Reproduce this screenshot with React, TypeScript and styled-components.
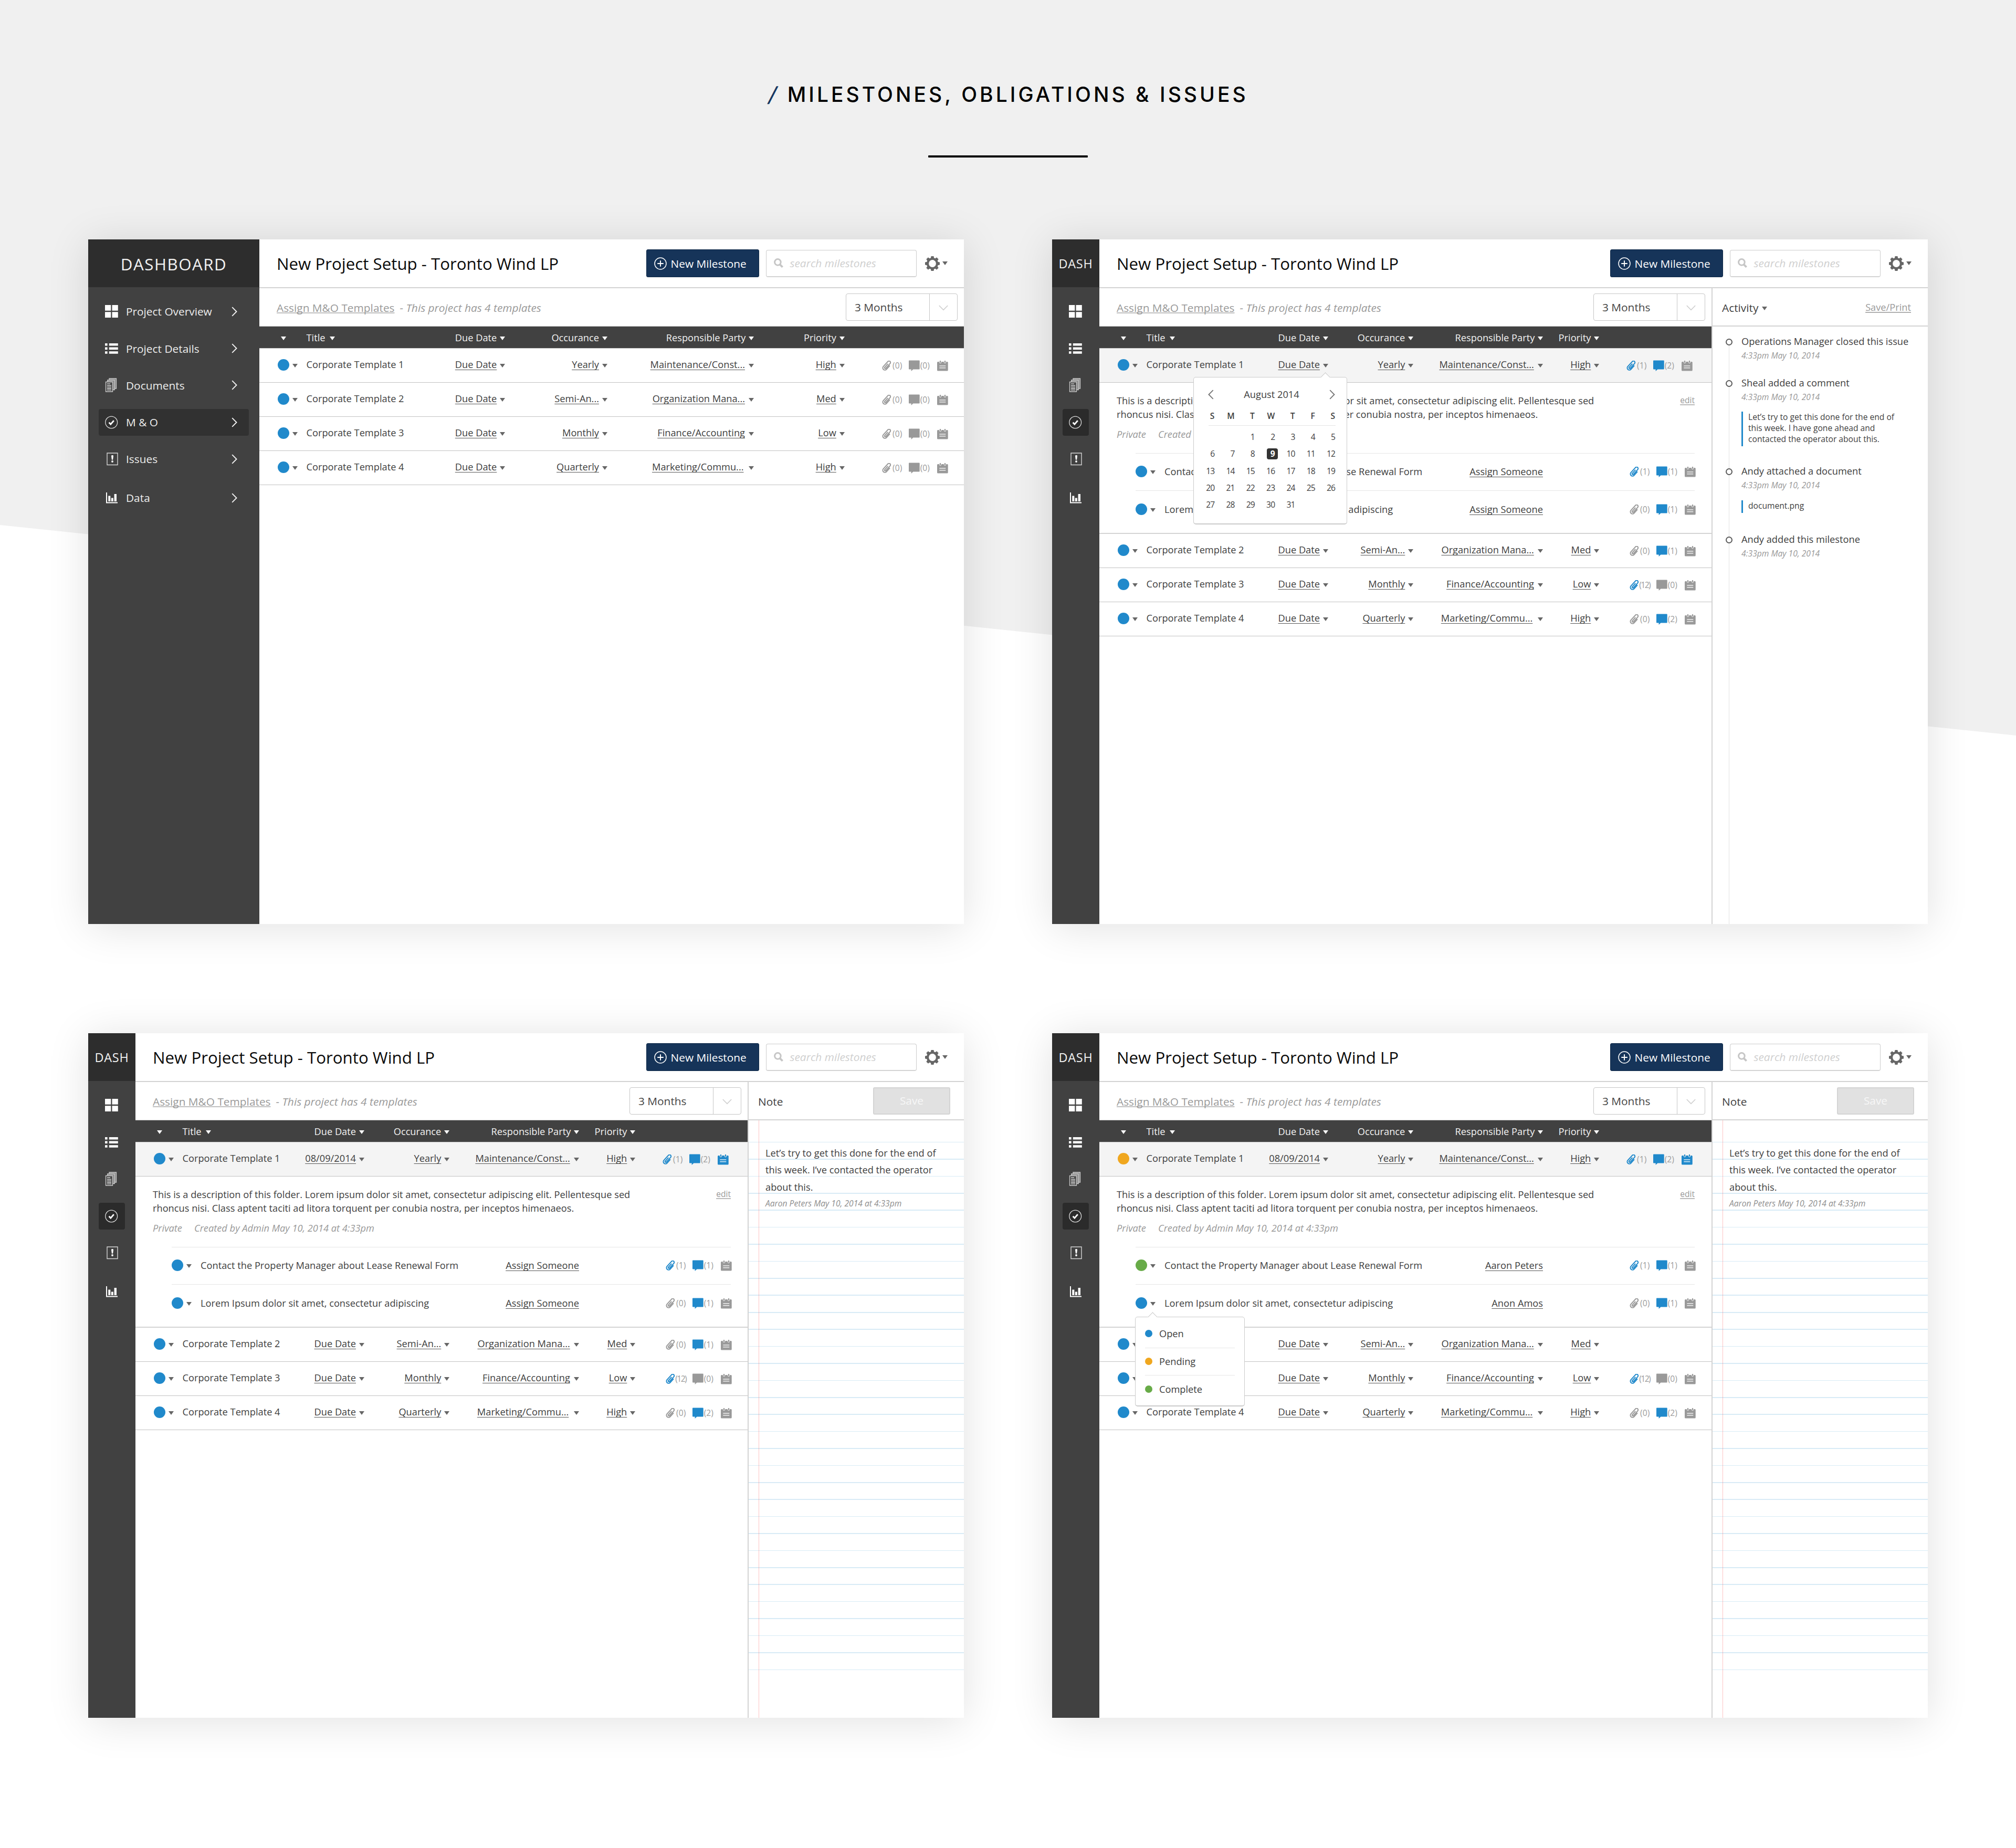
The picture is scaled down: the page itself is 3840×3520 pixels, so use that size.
import type { ReactNode } from "react";
import styled, { createGlobalStyle, css } from "styled-components";

const BLUE = "#2089cb";
const ORANGE = "#f0a71f";
const GREEN = "#68ab48";
const GRAY = "#999";
const LINE = "#c9c9c9";

const GlobalStyle = createGlobalStyle`
  * {
    box-sizing: border-box;
  }
  body {
    margin: 0;
    background: #fff;
    color: #3e3e3e;
    font-family: "Open Sans", sans-serif;
    font-size: 18.24px;
    text-decoration-skip-ink: none;
  }
`;

const Page = styled.div`
  position: relative;
  width: 3840px;
  height: 3520px;
  overflow: hidden;

  &::before {
    content: "";
    position: absolute;
    inset: 0;
    z-index: -1;
    background: #f0f0f0;
    clip-path: polygon(0 0, 100% 0, 100% 1401px, 0 1000px);
  }
`;

const PageHeader = styled.header`
  height: 456px;
  padding-top: 156px;
  display: flex;
  flex-direction: column;
  align-items: center;
`;

const PageTitle = styled.h1`
  margin: 0;
  padding-left: 3px;
  height: 48px;
  line-height: 48px;
  font-family: Inter, sans-serif;
  font-size: 39px;
  font-weight: 500;
  letter-spacing: 5.02px;
  color: #000;
  white-space: nowrap;
`;

const Slash = styled.span`
  display: inline-block;
  margin-right: 15px;
  font-weight: 500;
  color: #16365f;
  transform: skewX(-14deg);
`;

const Rule = styled.div`
  width: 304px;
  height: 4px;
  margin-top: 92px;
  border-radius: 1px;
  background: #000;
`;

const Screens = styled.main`
  display: grid;
  grid-template-columns: 1668px 1668px;
  column-gap: 168px;
  row-gap: 208px;
  margin-left: 168px;
`;

const Window = styled.section`
  display: flex;
  height: 1304px;
  background: #fff;
  box-shadow: 0 6px 75px rgba(0, 0, 0, 0.12);
`;

/* sidebar */

const Sidebar = styled.aside<{ $collapsed: boolean }>`
  flex: none;
  width: ${(p) => (p.$collapsed ? 90 : 326)}px;
  background: #414141;
`;

const Brand = styled.div<{ $collapsed: boolean }>`
  height: 91px;
  padding-top: 2px;
  display: flex;
  align-items: center;
  justify-content: center;
  background: #2d2d2d;
  color: #f2f2f2;
  ${(p) =>
    p.$collapsed
      ? css`
          font-size: 23.45px;
          letter-spacing: 0.75px;
          padding-top: 0;
        `
      : css`
          font-size: 31.27px;
          letter-spacing: 1.5px;
        `}
`;

const Nav = styled.nav`
  display: flex;
  flex-direction: column;
  gap: 19.6px;
  padding: 21px 20px 0 19.5px;
`;

const NavItem = styled.a<{ $active?: boolean; $collapsed: boolean }>`
  height: 50.7px;
  padding: 0 ${(p) => (p.$collapsed ? 0 : 22)}px 0 12.5px;
  display: flex;
  align-items: center;
  border-radius: 4px;
  font-size: 20.85px;
  color: #ededed;
  background: ${(p) => (p.$active ? (p.$collapsed ? "#2b2b2b" : "#313131") : "none")};

  &:last-child {
    margin-top: 3.6px;
  }
`;

const NavIcon = styled.span`
  flex: none;
  width: 25px;
  display: flex;
  justify-content: center;
`;

const NavLabel = styled.span`
  flex: 1;
  margin-left: 15px;
`;

/* content */

const Content = styled.div`
  flex: 1;
  min-width: 0;
  display: flex;
  flex-direction: column;
`;

const TopBar = styled.header`
  height: 93px;
  flex: none;
  padding: 0 31px 0 33px;
  display: flex;
  align-items: center;
  border-bottom: 2px solid #d3d3d3;
`;

const ProjectTitle = styled.h2`
  flex: 1;
  margin: 1px 0 0;
  font-size: 31.27px;
  font-weight: 400;
  color: #0a0a0a;
`;

const NewButton = styled.button`
  width: 215px;
  height: 53px;
  padding: 0 0 0 14px;
  display: flex;
  align-items: center;
  gap: 8px;
  border: 1px solid #0f2947;
  border-radius: 3px;
  background: #163459;
  color: #fff;
  font: inherit;
  font-size: 20.85px;
`;

const SearchBox = styled.div`
  width: 287px;
  height: 52px;
  margin-left: 13px;
  padding-left: 14px;
  display: flex;
  align-items: center;
  gap: 13px;
  border: 1.5px solid #ccc;
  border-bottom: 2px solid #d4d4d4;
  border-radius: 4px;
  font-size: 20.85px;
  font-style: italic;
  color: #cfcfcf;
`;

const Settings = styled.div`
  margin-left: 16.5px;
  display: flex;
  align-items: center;
  gap: 5px;
`;

const Body = styled.div`
  flex: 1;
  display: flex;
`;

const Main = styled.div`
  position: relative;
  flex: 1;
  min-width: 0;
`;

const SubBar = styled.div`
  height: 73px;
  padding: 0 12px 0 33px;
  display: flex;
  align-items: center;
  border-bottom: 1px solid ${LINE};
  font-size: 20.85px;
  color: ${GRAY};
`;

const AssignLink = styled.a`
  padding-top: 2px;
  text-decoration: underline 2px #c0c0c0;
  text-underline-offset: 1px;
`;

const Hint = styled.em`
  flex: 1;
  margin-left: 10px;
  padding-top: 2px;
`;

const Select = styled.div`
  width: 213px;
  height: 52px;
  display: flex;
  align-items: center;
  border: 1px solid #c6c6c6;
  border-radius: 4px;
  color: #444;
  font-size: 20.85px;
`;

const SelectValue = styled.span`
  width: 159px;
  height: 100%;
  padding: 0 0 0 16px;
  display: flex;
  align-items: center;
  border-right: 1px solid #c6c6c6;
`;

const SelectArrow = styled.span`
  flex: 1;
  padding-top: 3px;
  display: flex;
  justify-content: center;
`;

const Caret = styled.i<{ $color?: string; $top?: number }>`
  flex: none;
  width: 0;
  height: 0;
  margin-top: ${(p) => p.$top ?? 0}px;
  border: 5px solid transparent;
  border-top: 7px solid ${(p) => p.$color ?? "#666"};
  border-bottom: 0;
`;

/* table */

const columns = {
  wide: "89.5px 378.8px 194.7px 279.5px 172.3px 1fr",
  narrow: "89.5px 346.5px 162.3px 247px 107px 1fr",
};

const TableHead = styled.div<{ $narrow: boolean }>`
  height: 42px;
  padding-top: 1px;
  display: grid;
  grid-template-columns: ${(p) => (p.$narrow ? columns.narrow : columns.wide)};
  align-items: center;
  border-bottom: 1px solid #d0d0d0;
  background: #414141;
  color: #f3f3f3;
`;

const TableRow = styled.div<{ $narrow: boolean; $selected?: boolean }>`
  height: 65.1px;
  display: grid;
  grid-template-columns: ${(p) => (p.$narrow ? columns.narrow : columns.wide)};
  align-items: center;
  border-bottom: 1px solid #c2c2c2;
  background: ${(p) => (p.$selected ? "#f4f4f4" : "#fff")};
`;

const StatusCell = styled.div`
  padding: 0 0 2px 35px;
  display: flex;
  align-items: center;
  gap: 6px;
`;

const SortAll = styled.div`
  padding: 2px 0 0 41px;
`;

const TitleCell = styled.div`
  display: flex;
  align-items: center;
  justify-content: space-between;
  white-space: nowrap;
`;

const HeadCell = styled.div`
  display: flex;
  align-items: center;
  justify-content: flex-end;
  gap: 6px;
`;

const Cell = styled(HeadCell)<{ $trail?: number }>`
  gap: ${(p) => 6 + (p.$trail ?? 0)}px;
`;

const TitleHead = styled.span`
  display: flex;
  align-items: center;
  gap: 8px;
`;

const RowTitle = styled.span`
  padding-bottom: 5px;
`;

const Underlined = styled.a`
  padding-bottom: 5px;
  text-decoration: underline 1px #555;
  text-underline-offset: 2.5px;
`;

const Dot = styled.i<{ $color: string; $size?: number }>`
  flex: none;
  width: ${(p) => p.$size ?? 22}px;
  height: ${(p) => p.$size ?? 22}px;
  border-radius: 50%;
  background: ${(p) => p.$color};
`;

const Meta = styled.div<{ $right: number }>`
  justify-self: end;
  margin-right: ${(p) => p.$right}px;
  padding-top: 1px;
  display: grid;
  grid-template-columns: 19px 31.6px 21px 32.6px 21px;
  align-items: center;
`;

const Count = styled.span<{ $tight?: boolean }>`
  margin-left: ${(p) => (p.$tight ? -1 : 0.8)}px;
  padding-bottom: 2px;
  font-size: 15.64px;
  letter-spacing: ${(p) => (p.$tight ? -1.6 : 0)}px;
  color: #9c9c9c;
`;

/* expanded row */

const Detail = styled.div`
  height: 288px;
  padding: 21px 32px 0 33px;
  border-bottom: 2px solid #d4d4d4;
`;

const DetailTop = styled.div`
  display: flex;
  justify-content: space-between;
  line-height: 26px;
`;

const Description = styled.p`
  width: 925px;
  margin: 0;
`;

const EditLink = styled.a`
  font-size: 15.64px;
  line-height: 24px;
  color: ${GRAY};
  text-decoration: underline 1.5px #bbb;
  text-underline-offset: 2px;
`;

const Byline = styled.p`
  display: flex;
  gap: 23px;
  margin: 12px 0 0;
  line-height: 26px;
  font-style: italic;
  color: ${GRAY};
`;

const SubTasks = styled.div`
  margin: 22.5px 0 0 36px;
`;

const SubTask = styled.div`
  height: 71.7px;
  padding-bottom: 1px;
  display: grid;
  grid-template-columns: 55px 1fr auto 289px;
  align-items: center;
  border-top: 1px solid #e6e6e6;
`;

const SubStatus = styled.div`
  display: flex;
  align-items: center;
  gap: 6px;
`;

const Assignee = styled.a`
  text-decoration: underline 1px #555;
  text-underline-offset: 2.5px;
`;

/* popovers */

const Popover = styled.div<{ $left: number; $top: number; $tip: number }>`
  position: absolute;
  left: ${(p) => p.$left}px;
  top: ${(p) => p.$top}px;
  border: 1.5px solid #cbcbcb;
  border-bottom-width: 2px;
  border-radius: 5px;
  background: #fff;

  &::before {
    content: "";
    position: absolute;
    top: -7.5px;
    left: ${(p) => p.$tip - 7}px;
    width: 12px;
    height: 12px;
    border: 1px solid #cbcbcb;
    border-right: 0;
    border-bottom: 0;
    background: #fff;
    transform: rotate(45deg);
  }
`;

const CalendarBox = styled(Popover)`
  width: 293px;
  height: 281px;
`;

const CalendarHead = styled.div`
  display: flex;
  align-items: center;
  justify-content: space-between;
  height: 26px;
  margin: 19px 22px 0 27px;
`;

const Weekdays = styled.div`
  display: grid;
  grid-template-columns: repeat(7, 38.3px);
  height: 22px;
  margin-top: 17px;
  padding-left: 1px;
  font-size: 15.64px;
  font-weight: 600;
  line-height: 22px;
  text-align: right;
`;

const CalendarRule = styled.div`
  height: 1px;
  margin: 7px 21px 5px 28px;
  background: #e4e4e4;
`;

const Days = styled.div`
  display: grid;
  grid-template-columns: repeat(7, 38.3px);
  grid-auto-rows: 32.3px;
  align-items: center;
  justify-items: end;
  padding-left: 1px;
  font-size: 15.64px;
  letter-spacing: -0.9px;
`;

const Day = styled.span<{ $start?: number; $picked?: boolean }>`
  ${(p) => p.$start && `grid-column-start: ${p.$start};`}
  ${(p) =>
    p.$picked &&
    css`
      width: 21px;
      height: 21px;
      margin-right: -6px;
      border-radius: 4px;
      background: #333;
      color: #fff;
      font-weight: 700;
      line-height: 20px;
      text-align: center;
    `}
`;

const StatusMenu = styled(Popover)`
  width: 209px;
  height: 171px;
  padding: 5px 18px 0;
`;

const StatusOption = styled.div`
  height: 52.5px;
  display: flex;
  align-items: center;
  gap: 13px;

  & + & {
    border-top: 1px solid #e6e6e6;
  }
`;

/* right panel */

const Panel = styled.aside`
  flex: none;
  width: 412px;
  display: flex;
  flex-direction: column;
  border-left: 2px solid #d3d3d3;
`;

const PanelHead = styled.div<{ $right: number }>`
  height: 73px;
  flex: none;
  padding: 0 ${(p) => p.$right}px 0 18px;
  display: flex;
  align-items: center;
  justify-content: space-between;
  border-bottom: 2px solid #d3d3d3;
`;

const PanelTitle = styled.span`
  display: flex;
  align-items: center;
  gap: 7px;
  padding-top: 2px;
  font-size: 20.85px;
`;

const SaveLink = styled.a`
  color: ${GRAY};
  text-decoration: underline 1.5px #b0b0b0;
  text-underline-offset: 2px;
`;

const SaveButton = styled.button`
  width: 147px;
  height: 52px;
  padding: 0 0 2px;
  border: 2px solid #d4d4d4;
  border-radius: 3px;
  background: #e1e1e1;
  color: #f7f7f7;
  font: inherit;
  font-size: 20.85px;
`;

const Timeline = styled.div`
  flex: 1;
  padding: 15px 20px 0 25px;
  background: linear-gradient(#e2e2e2, #e2e2e2) 31px 30px / 1px 100% no-repeat;
`;

const Event = styled.div<{ $gap?: number }>`
  display: flex;
  gap: 17px;
  margin-bottom: ${(p) => p.$gap ?? 0}px;
`;

const EventMark = styled.i`
  flex: none;
  width: 13px;
  height: 13px;
  margin-top: 8px;
  border: 2px solid #5a5a5a;
  border-radius: 50%;
  background: #fff;
`;

const EventTitle = styled.div`
  height: 27px;
  line-height: 26px;
  white-space: nowrap;
`;

const EventDate = styled.div`
  font-size: 15.64px;
  font-style: italic;
  line-height: 26px;
  color: ${GRAY};
`;

const Quote = styled.blockquote`
  width: 320px;
  margin: 15.5px 0 0;
  padding: 0 20px 3.4px 10px;
  border-left: 3px solid ${BLUE};
  font-size: 15.64px;
  line-height: 20.9px;
`;

const NotePaper = styled.div`
  flex: 1;
  padding: 46px 20px 0 32px;
  background:
    linear-gradient(rgba(248, 60, 60, 0.3), rgba(248, 60, 60, 0.3)) 19px 0 / 1px 100% no-repeat,
    repeating-linear-gradient(transparent 0 30.8px, #d8ebf6 30.8px 32.41px) 0 10.3px / 100% 1037px
      no-repeat;
`;

const NoteText = styled.p`
  width: 345px;
  margin: 0;
  line-height: 32.4px;
`;

const NoteBy = styled.p`
  margin: 1.7px 0 0;
  font-size: 15.64px;
  font-style: italic;
  line-height: 26px;
  color: #8e8e8e;
`;

/* icons */

const GridIcon = () => (
  <svg width="25" height="24" viewBox="0 0 25 24" fill="#fff">
    <path d="M0 0h11.3v10.8H0zM13.5 0h11.3v10.8H13.5zM0 13.2h11.3V24H0zM13.5 13.2h11.3V24H13.5z" />
  </svg>
);

const ListIcon = () => (
  <svg width="25" height="20" viewBox="0 0 25 20" fill="#fff">
    <path d="M0 0h4.6v4.5H0zM7.8 0h17v4.5h-17zM0 7.6h4.6v4.5H0zM7.8 7.6h17v4.5h-17zM0 15.2h4.6v4.5H0zM7.8 15.2h17v4.5h-17z" />
  </svg>
);

const DocsIcon = () => (
  <svg width="25" height="27" viewBox="0 0 25 27" fill="#8a8a8a" stroke="#c8c8c8" strokeWidth="1.3">
    <path d="M8 1h13.5v19H8z" />
    <path d="M4.7 4h13.5v18.5H4.7z" />
    <path d="M1.5 7.5h13V26h-13z" fill="#4a4a4a" />
    <path d="M4 11.2h6M4 14.4h8M4 17.2h8M4 20h8M4 22.8h8" stroke="#e0e0e0" />
  </svg>
);

const CheckIcon = () => (
  <svg width="25" height="25" viewBox="0 0 25 25" fill="none" stroke="#fff">
    <circle cx="12.2" cy="12.5" r="11.4" strokeWidth="1.3" stroke="#ddd" />
    <path d="M7.6 12.8l3.2 3.3 6-7" strokeWidth="2.9" />
  </svg>
);

const IssueIcon = () => (
  <svg width="25" height="25" viewBox="0 0 25 25">
    <path d="M4 1h20v22.5H4z" fill="none" stroke="#d5d5d5" strokeWidth="1.4" />
    <path d="M12 6.2q0-1.2 2-1.2t2 1.2l-.9 7.6h-2.2z" fill="#fff" />
    <circle cx="14" cy="17" r="1.9" fill="#fff" />
  </svg>
);

const DataIcon = () => (
  <svg width="25" height="21" viewBox="0 0 25 21" fill="#fff">
    <path d="M2 0h2v18.5h20v2H2z" />
    <path d="M6.3 6.5h4v10.5h-4zM11.8 10.5h4V17h-4zM17.6 3h4.4v14h-4.4z" />
  </svg>
);

const Chevron = ({ color = "#f2f2f2", flip = false }) => (
  <svg width="11" height="19" viewBox="0 0 11 19" fill="none" stroke={color} strokeWidth="1.9">
    <path d={flip ? "M9.7 1.2L1.4 9.5l8.3 8.3" : "M1.2 1.2l8.3 8.3-8.3 8.3"} />
  </svg>
);

const DownIcon = () => (
  <svg width="18" height="11" viewBox="0 0 18 11" fill="none" stroke="#cfcfcf" strokeWidth="1.7">
    <path d="M.8 1L9 9.4 17.2 1" />
  </svg>
);

const PlusIcon = () => (
  <svg width="24" height="24" viewBox="0 0 24 24" fill="none" stroke="#fff">
    <circle cx="12" cy="12" r="11" strokeWidth="1.5" />
    <path d="M12 6.2v11.6M6.2 12h11.6" strokeWidth="1.9" />
  </svg>
);

const SearchIcon = () => (
  <svg width="18" height="18" viewBox="0 0 18 18" fill="none" stroke="#c6c6c6">
    <circle cx="7.4" cy="7.4" r="5.8" strokeWidth="3" />
    <path d="M11.6 11.8l5 5" strokeWidth="3.8" />
  </svg>
);

const GearIcon = () => (
  <svg width="28" height="28" viewBox="-14 -14 28 28" fill="#666">
    <circle r="9" fill="none" stroke="#666" strokeWidth="4.2" />
    {[0, 45, 90, 135, 180, 225, 270, 315].map((a) => (
      <path key={a} d="M-3.2 -9.6l.7-4.4h5l.7 4.4z" transform={`rotate(${a})`} />
    ))}
  </svg>
);

const ClipIcon = ({ color }: { color: string }) => (
  <svg width="19" height="19" viewBox="-9.5 -9.5 19 19" fill="none" stroke={color} strokeWidth="2">
    <path
      transform="rotate(42)"
      d="M-1.1 -3.8V5.2a1.4 1.4 0 0 0 2.8 0V-7a2.9 2.9 0 0 0-5.8 0V5.9a4 4 0 0 0 8 0V-3.8"
    />
  </svg>
);

const CommentIcon = ({ color }: { color: string }) => (
  <svg width="21" height="21" viewBox="0 0 21 21" fill={color}>
    <path d="M1 .5h18.7a1 1 0 0 1 1 1v15a1 1 0 0 1-1 1H8.4L4.6 21v-3.5H1a1 1 0 0 1-1-1v-15a1 1 0 0 1 1-1z" />
  </svg>
);

const NoteIcon = ({ color }: { color: string }) => (
  <svg width="21" height="20" viewBox="0 0 21 20">
    <rect y="2" width="20.7" height="17.5" rx="1.5" fill={color} />
    <path d="M3.8 1.2h4.4v2.6L6 5.4 3.8 3.8zM12.8 1.2h4.4v2.6L15 5.4l-2.2-1.6z" fill="#e6e6e6" />
    <path d="M5 0h2v4H5zM14 0h2v4h-2z" fill={color} />
    <path d="M4.3 10h12M4.3 13.8h12" stroke="#fff" strokeWidth="1.4" opacity=".85" />
  </svg>
);

/* data */

type Info = { clips: number; comments: number; note?: boolean };

type Template = {
  title: string;
  due: string;
  occurance: string;
  party: string;
  trail?: number;
  priority: string;
  color?: string;
  info?: Info;
};

type Task = { title: string; assignee: string; color: string; info: Info };

const navItems = [
  { label: "Project Overview", icon: <GridIcon /> },
  { label: "Project Details", icon: <ListIcon /> },
  { label: "Documents", icon: <DocsIcon /> },
  { label: "M & O", icon: <CheckIcon />, active: true },
  { label: "Issues", icon: <IssueIcon /> },
  { label: "Data", icon: <DataIcon /> },
];

const base: Template[] = [
  { title: "Corporate Template 1", due: "Due Date", occurance: "Yearly", party: "Maintenance/Const...", trail: 1.5, priority: "High" },
  { title: "Corporate Template 2", due: "Due Date", occurance: "Semi-An...", party: "Organization Mana...", trail: 1.5, priority: "Med" },
  { title: "Corporate Template 3", due: "Due Date", occurance: "Monthly", party: "Finance/Accounting", trail: 1.5, priority: "Low" },
  { title: "Corporate Template 4", due: "Due Date", occurance: "Quarterly", party: "Marketing/Commu...", trail: 4, priority: "High" },
];

const infos: Info[] = [
  { clips: 1, comments: 2 },
  { clips: 0, comments: 1 },
  { clips: 12, comments: 0 },
  { clips: 0, comments: 2 },
];

const emptyTemplates = base.map((t) => ({ ...t, info: { clips: 0, comments: 0 } }));
const activeTemplates: Template[] = base.map((t, i) => ({ ...t, info: infos[i] }));

const datedTemplates: Template[] = activeTemplates.map((t, i) =>
  i === 0 ? { ...t, due: "08/09/2014", info: { clips: 1, comments: 2, note: true } } : t
);

const pendingTemplates: Template[] = datedTemplates.map((t, i) => {
  if (i === 0) return { ...t, color: ORANGE };
  if (i === 1) return { ...t, info: undefined };
  return t;
});

const makeTasks = (first: string, second: string, color: string): Task[] => [
  {
    title: "Contact the Property Manager about Lease Renewal Form",
    assignee: first,
    color,
    info: { clips: 1, comments: 1 },
  },
  {
    title: "Lorem Ipsum dolor sit amet, consectetur adipiscing",
    assignee: second,
    color: BLUE,
    info: { clips: 0, comments: 1 },
  },
];

const openTasks = makeTasks("Assign Someone", "Assign Someone", BLUE);
const assignedTasks = makeTasks("Aaron Peters", "Anon Amos", GREEN);

/* components */

const InfoIcons = ({ info, right }: { info: Info; right: number }) => (
  <Meta $right={right}>
    <ClipIcon color={info.clips ? BLUE : GRAY} />
    <Count $tight={info.clips > 9}>({info.clips})</Count>
    <CommentIcon color={info.comments ? BLUE : GRAY} />
    <Count>({info.comments})</Count>
    <NoteIcon color={info.note ? BLUE : GRAY} />
  </Meta>
);

const Head = ({ children }: { children: string }) => (
  <HeadCell>
    {children}
    <Caret $color="#fff" $top={3} />
  </HeadCell>
);

const Row = ({ row, narrow, selected }: { row: Template; narrow: boolean; selected?: boolean }) => (
  <TableRow $narrow={narrow} $selected={selected}>
    <StatusCell>
      <Dot $color={row.color ?? BLUE} />
      <Caret $top={3} />
    </StatusCell>
    <TitleCell>
      <RowTitle>{row.title}</RowTitle>
      <Cell>
        <Underlined>{row.due}</Underlined>
        <Caret />
      </Cell>
    </TitleCell>
    <Cell>
      <Underlined>{row.occurance}</Underlined>
      <Caret />
    </Cell>
    <Cell $trail={row.trail}>
      <Underlined>{row.party}</Underlined>
      <Caret />
    </Cell>
    <Cell>
      <Underlined>{row.priority}</Underlined>
      <Caret />
    </Cell>
    {row.info && <InfoIcons info={row.info} right={selected ? 36.5 : 30.5} />}
  </TableRow>
);

const FolderDetail = ({ tasks }: { tasks: Task[] }) => (
  <Detail>
    <DetailTop>
      <Description>
        This is a description of this folder. Lorem ipsum dolor sit amet, consectetur adipiscing
        elit. Pellentesque sed rhoncus nisi. Class aptent taciti ad litora torquent per conubia
        nostra, per inceptos himenaeos.
      </Description>
      <EditLink>edit</EditLink>
    </DetailTop>
    <Byline>
      <span>Private</span>
      <span>Created by Admin May 10, 2014 at 4:33pm</span>
    </Byline>
    <SubTasks>
      {tasks.map((task) => (
        <SubTask key={task.title}>
          <SubStatus>
            <Dot $color={task.color} />
            <Caret $top={2} />
          </SubStatus>
          <span>{task.title}</span>
          <Assignee>{task.assignee}</Assignee>
          <InfoIcons info={task.info} right={-1.5} />
        </SubTask>
      ))}
    </SubTasks>
  </Detail>
);

const Calendar = () => (
  <CalendarBox $left={179} $top={169} $tip={251}>
    <CalendarHead>
      <Chevron color="#777" flip />
      August 2014
      <Chevron color="#777" />
    </CalendarHead>
    <Weekdays>
      {["S", "M", "T", "W", "T", "F", "S"].map((d, i) => (
        <span key={i}>{d}</span>
      ))}
    </Weekdays>
    <CalendarRule />
    <Days>
      {Array.from({ length: 31 }, (_, i) => i + 1).map((d) => (
        <Day key={d} $start={d === 1 ? 3 : undefined} $picked={d === 9}>
          {d}
        </Day>
      ))}
    </Days>
  </CalendarBox>
);

const StatusPicker = () => (
  <StatusMenu $left={68} $top={447} $tip={33}>
    <StatusOption>
      <Dot $color={BLUE} $size={14} />
      Open
    </StatusOption>
    <StatusOption>
      <Dot $color={ORANGE} $size={14} />
      Pending
    </StatusOption>
    <StatusOption>
      <Dot $color={GREEN} $size={14} />
      Complete
    </StatusOption>
  </StatusMenu>
);

const ActivityItem = ({ title, gap, children }: { title: string; gap?: number; children?: ReactNode }) => (
  <Event $gap={gap}>
    <EventMark />
    <div>
      <EventTitle>{title}</EventTitle>
      <EventDate>4:33pm May 10, 2014</EventDate>
      {children}
    </div>
  </Event>
);

const ActivityPanel = () => (
  <Panel>
    <PanelHead $right={32}>
      <PanelTitle>
        Activity
        <Caret $top={3} />
      </PanelTitle>
      <SaveLink>Save/Print</SaveLink>
    </PanelHead>
    <Timeline>
      <ActivityItem title="Operations Manager closed this issue" gap={25.5} />
      <ActivityItem title="Sheal added a comment" gap={34}>
        <Quote>
          Let’s try to get this done for the end of this week. I have gone ahead and contacted the
          operator about this.
        </Quote>
      </ActivityItem>
      <ActivityItem title="Andy attached a document" gap={37.5}>
        <Quote>document.png</Quote>
      </ActivityItem>
      <ActivityItem title="Andy added this milestone" />
    </Timeline>
  </Panel>
);

const NotePanel = () => (
  <Panel>
    <PanelHead $right={26}>
      <PanelTitle>Note</PanelTitle>
      <SaveButton>Save</SaveButton>
    </PanelHead>
    <NotePaper>
      <NoteText>Let’s try to get this done for the end of this week. I’ve contacted the operator about this.</NoteText>
      <NoteBy>Aaron Peters May 10, 2014 at 4:33pm</NoteBy>
    </NotePaper>
  </Panel>
);

type ScreenProps = {
  templates: Template[];
  tasks?: Task[];
  panel?: ReactNode;
  overlay?: ReactNode;
};

const Screen = ({ templates, tasks, panel, overlay }: ScreenProps) => {
  const collapsed = Boolean(panel);
  return (
    <Window>
      <Sidebar $collapsed={collapsed}>
        <Brand $collapsed={collapsed}>{collapsed ? "DASH" : "DASHBOARD"}</Brand>
        <Nav>
          {navItems.map((item) => (
            <NavItem key={item.label} $active={item.active} $collapsed={collapsed}>
              <NavIcon>{item.icon}</NavIcon>
              {!collapsed && (
                <>
                  <NavLabel>{item.label}</NavLabel>
                  <Chevron />
                </>
              )}
            </NavItem>
          ))}
        </Nav>
      </Sidebar>
      <Content>
        <TopBar>
          <ProjectTitle>New Project Setup - Toronto Wind LP</ProjectTitle>
          <NewButton>
            <PlusIcon />
            New Milestone
          </NewButton>
          <SearchBox>
            <SearchIcon />
            search milestones
          </SearchBox>
          <Settings>
            <GearIcon />
            <Caret />
          </Settings>
        </TopBar>
        <Body>
          <Main>
            <SubBar>
              <AssignLink>Assign M&O Templates</AssignLink>
              <Hint>- This project has 4 templates</Hint>
              <Select>
                <SelectValue>3 Months</SelectValue>
                <SelectArrow>
                  <DownIcon />
                </SelectArrow>
              </Select>
            </SubBar>
            <TableHead $narrow={collapsed}>
              <SortAll>
                <Caret as="div" $color="#fff" />
              </SortAll>
              <TitleCell>
                <TitleHead>
                  Title
                  <Caret $color="#fff" $top={3} />
                </TitleHead>
                <Head>Due Date</Head>
              </TitleCell>
              <Head>Occurance</Head>
              <Head>Responsible Party</Head>
              <Head>Priority</Head>
            </TableHead>
            {templates.map((row, i) => (
              <div key={row.title}>
                <Row row={row} narrow={collapsed} selected={i === 0 && Boolean(tasks)} />
                {i === 0 && tasks && <FolderDetail tasks={tasks} />}
              </div>
            ))}
            {overlay}
          </Main>
          {panel}
        </Body>
      </Content>
    </Window>
  );
};

export default function App() {
  return (
    <Page>
      <GlobalStyle />
      <PageHeader>
        <PageTitle>
          <Slash>/</Slash>MILESTONES, OBLIGATIONS & ISSUES
        </PageTitle>
        <Rule />
      </PageHeader>
      <Screens>
        <Screen templates={emptyTemplates} />
        <Screen
          templates={activeTemplates}
          tasks={openTasks}
          panel={<ActivityPanel />}
          overlay={<Calendar />}
        />
        <Screen templates={datedTemplates} tasks={openTasks} panel={<NotePanel />} />
        <Screen
          templates={pendingTemplates}
          tasks={assignedTasks}
          panel={<NotePanel />}
          overlay={<StatusPicker />}
        />
      </Screens>
    </Page>
  );
}
